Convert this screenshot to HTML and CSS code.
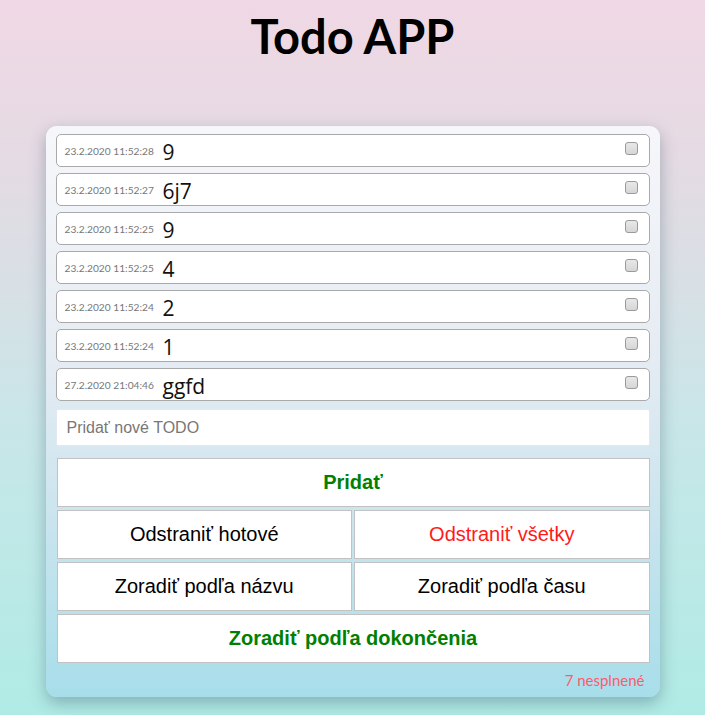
FILE: index.html
```html
<!DOCTYPE html>
<html lang="sk">
<head>
<meta charset="utf-8">
<title>Todo APP</title>
<link rel="stylesheet" href="styles.css">
</head>
<body>
<h1 class="title">Todo APP</h1>
<div class="card">
  <ul class="list">
    <li class="item"><span class="time">23.2.2020 11:52:28</span><span class="name">9</span><input class="check" type="checkbox"></li>
    <li class="item"><span class="time">23.2.2020 11:52:27</span><span class="name">6j7</span><input class="check" type="checkbox"></li>
    <li class="item"><span class="time">23.2.2020 11:52:25</span><span class="name">9</span><input class="check" type="checkbox"></li>
    <li class="item"><span class="time">23.2.2020 11:52:25</span><span class="name">4</span><input class="check" type="checkbox"></li>
    <li class="item"><span class="time">23.2.2020 11:52:24</span><span class="name">2</span><input class="check" type="checkbox"></li>
    <li class="item"><span class="time">23.2.2020 11:52:24</span><span class="name">1</span><input class="check" type="checkbox"></li>
    <li class="item"><span class="time">27.2.2020 21:04:46</span><span class="name">ggfd</span><input class="check" type="checkbox"></li>
  </ul>
  <input class="new" type="text" placeholder="Pridať nové TODO">
  <div class="buttons">
    <button class="btn full green">Pridať</button>
    <button class="btn">Odstraniť hotové</button>
    <button class="btn red">Odstraniť všetky</button>
    <button class="btn">Zoradiť podľa názvu</button>
    <button class="btn">Zoradiť podľa času</button>
    <button class="btn full green">Zoradiť podľa dokončenia</button>
  </div>
  <div class="footer">7 nesplnené</div>
</div>
</body>
</html>
```

FILE: styles.css
```css
html, body {
  margin: 0;
  padding: 0;
}
body {
  min-height: 715px;
  background: linear-gradient(to bottom, #f0d8e5 0%, #e3dbe3 25%, #c8e6e8 60%, #b0ebe5 100%);
  font-family: "Noto Sans", "Open Sans", sans-serif;
  overflow: hidden;
}
.title {
  margin: 8px 0 0;
  height: 118px;
  text-align: center;
  font-family: "Lato", "Noto Sans", sans-serif;
  font-weight: 700;
  font-size: 47px;
  line-height: 56px;
  color: #000;
}
.card {
  width: 614px;
  margin: 0 auto;
  box-sizing: border-box;
  padding: 8px 10px 0;
  border-radius: 11px;
  background: linear-gradient(to bottom, #f6f7fa 0%, #e6ecf3 40%, #c9e4ee 70%, #a7deea 100%);
  box-shadow: 0 6px 16px rgba(40, 70, 90, 0.35);
  height: 571px;
}
.list {
  list-style: none;
  margin: 0;
  padding: 0;
  display: flex;
  flex-direction: column;
  gap: 6px;
}
.item {
  height: 33px;
  box-sizing: border-box;
  border: 1px solid #a9a9a9;
  border-radius: 5px;
  background: #fff;
  display: flex;
  align-items: center;
  padding: 0 11px 0 8px;
}
.time {
  font-family: "Lato", "Noto Sans", sans-serif;
  font-size: 10.2px;
  color: #777;
  width: 98px;
  flex: none;
  margin-top: 1px;
}
.name {
  flex: 1;
  font-family: "Open Sans", "Noto Sans", sans-serif;
  font-size: 21px;
  line-height: 28px;
  color: #111;
  margin-top: 3px;
}
.check {
  appearance: none;
  -webkit-appearance: none;
  margin: 0;
  width: 13px;
  height: 13px;
  box-sizing: border-box;
  border: 1px solid #9a9a9a;
  border-radius: 3px;
  background: linear-gradient(#e8e8e8, #d6d6d6);
  align-self: flex-start;
  margin-top: 7px;
}
.new {
  display: block;
  width: 100%;
  box-sizing: border-box;
  margin-top: 8px;
  height: 37px;
  border: 1px solid #e3e9ef;
  border-radius: 2px;
  background: #fff;
  padding: 0 10px;
  font-family: "Liberation Sans", Arial, sans-serif;
  font-size: 16px;
  outline: none;
}
.new::placeholder {
  color: #777;
}
.buttons {
  margin-top: 12px;
  display: grid;
  grid-template-columns: 1fr 1fr;
  gap: 3px 2px;
  padding-left: 1px;
}
.btn {
  height: 49px;
  margin: 0;
  border: 1px solid #c2c2c2;
  background: #fff;
  font-family: "Liberation Sans", Arial, sans-serif;
  font-size: 20px;
  color: #000;
  padding: 0;
}
.btn.full {
  grid-column: 1 / 3;
}
.btn.green {
  color: #008000;
  font-weight: 700;
}
.btn.red {
  color: #ff1a1a;
}
.footer {
  text-align: right;
  padding: 8px 5px 0 0;
  font-family: "Lato", "Noto Sans", sans-serif;
  font-size: 15px;
  color: #ff5a6a;
}
```
